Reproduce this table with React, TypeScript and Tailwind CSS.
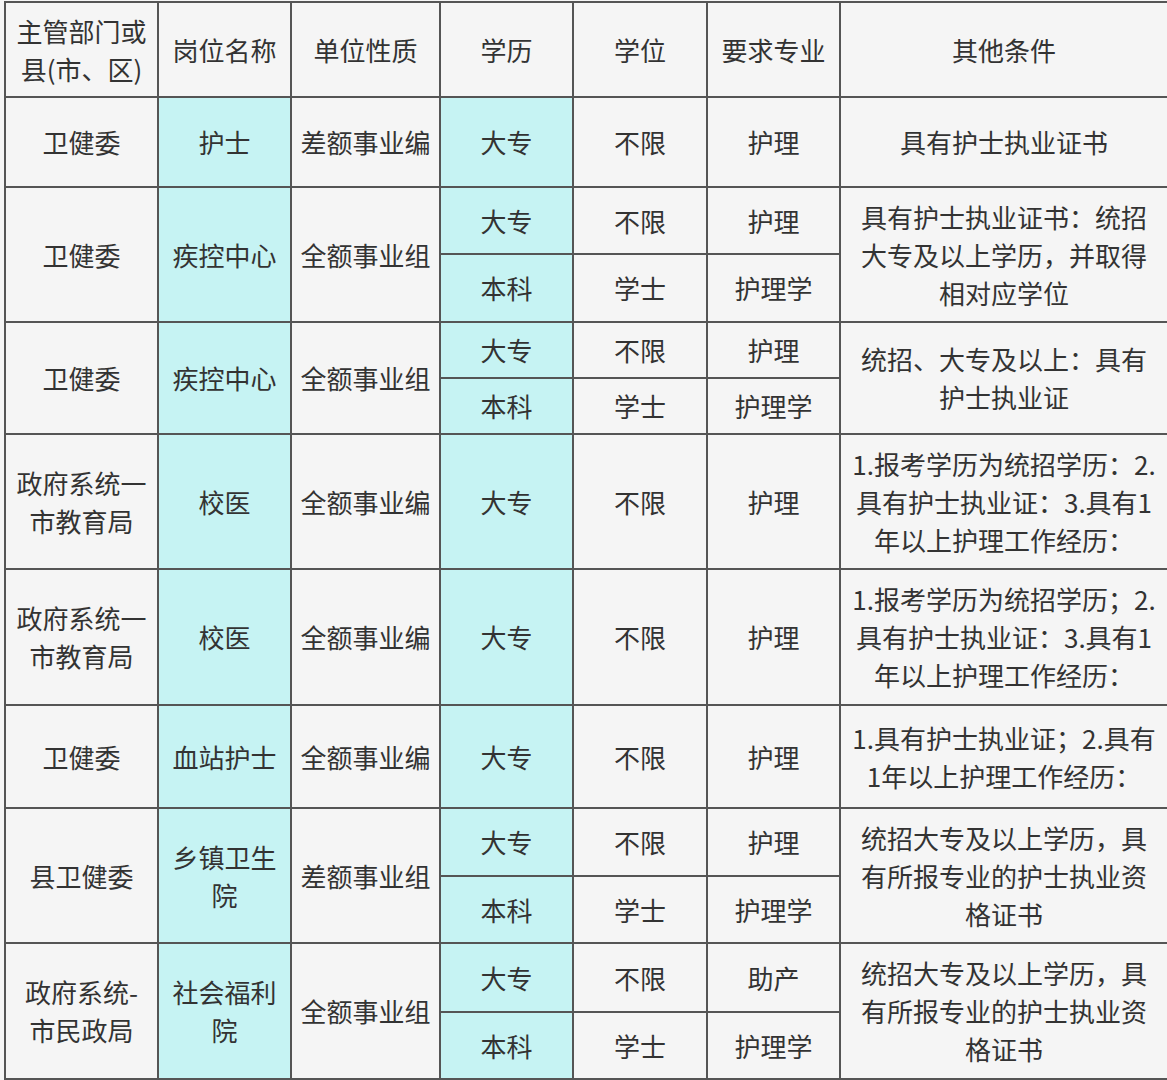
import React from 'react';

interface Sub {
    edu: string;
    degree: string;
    major: string;
    h: number;
}

interface Post {
    dept: string[];
    post: string[];
    nature: string;
    subs: Sub[];
    other: string[];
}

const posts: Post[] = [
    {
        dept: ['卫健委'],
        post: ['护士'],
        nature: '差额事业编',
        subs: [{ edu: '大专', degree: '不限', major: '护理', h: 90 }],
        other: ['具有护士执业证书'],
    },
    {
        dept: ['卫健委'],
        post: ['疾控中心'],
        nature: '全额事业组',
        subs: [
            { edu: '大专', degree: '不限', major: '护理', h: 67 },
            { edu: '本科', degree: '学士', major: '护理学', h: 68 },
        ],
        other: ['具有护士执业证书：统招', '大专及以上学历，并取得', '相对应学位'],
    },
    {
        dept: ['卫健委'],
        post: ['疾控中心'],
        nature: '全额事业组',
        subs: [
            { edu: '大专', degree: '不限', major: '护理', h: 56 },
            { edu: '本科', degree: '学士', major: '护理学', h: 56 },
        ],
        other: ['统招、大专及以上：具有', '护士执业证'],
    },
    {
        dept: ['政府系统一', '市教育局'],
        post: ['校医'],
        nature: '全额事业编',
        subs: [{ edu: '大专', degree: '不限', major: '护理', h: 135 }],
        other: ['1.报考学历为统招学历：2.', '具有护士执业证：3.具有1', '年以上护理工作经历：'],
    },
    {
        dept: ['政府系统一', '市教育局'],
        post: ['校医'],
        nature: '全额事业编',
        subs: [{ edu: '大专', degree: '不限', major: '护理', h: 136 }],
        other: ['1.报考学历为统招学历；2.', '具有护士执业证：3.具有1', '年以上护理工作经历：'],
    },
    {
        dept: ['卫健委'],
        post: ['血站护士'],
        nature: '全额事业编',
        subs: [{ edu: '大专', degree: '不限', major: '护理', h: 103 }],
        other: ['1.具有护士执业证；2.具有', '1年以上护理工作经历：'],
    },
    {
        dept: ['县卫健委'],
        post: ['乡镇卫生', '院'],
        nature: '差额事业组',
        subs: [
            { edu: '大专', degree: '不限', major: '护理', h: 68 },
            { edu: '本科', degree: '学士', major: '护理学', h: 67 },
        ],
        other: ['统招大专及以上学历，具', '有所报专业的护士执业资', '格证书'],
    },
    {
        dept: ['政府系统-', '市民政局'],
        post: ['社会福利', '院'],
        nature: '全额事业组',
        subs: [
            { edu: '大专', degree: '不限', major: '助产', h: 69 },
            { edu: '本科', degree: '学士', major: '护理学', h: 67 },
        ],
        other: ['统招大专及以上学历，具', '有所报专业的护士执业资', '格证书'],
    },
];

const cell = 'border-2 border-[#555] text-center align-middle px-1 leading-[38px]';
const cyan = 'bg-[#c6f3f3]';

function Lines({ lines }: { lines: string[] }) {
    return (
        <>
            {lines.map((l, i) => (
                <div key={i}>{l}</div>
            ))}
        </>
    );
}

export default function App() {
    return (
        <div
            className="w-[1167px] h-[1080px] bg-[#f5f5f5] pl-[4px] pt-[1px] text-[#333] text-[26px]"
            style={{ fontFamily: '"Noto Sans CJK SC", "Noto Sans", sans-serif' }}
        >
            <table className="table-fixed border-collapse w-[1163px]">
                <colgroup>
                    <col className="w-[153px]" />
                    <col className="w-[133px]" />
                    <col className="w-[149px]" />
                    <col className="w-[133px]" />
                    <col className="w-[134px]" />
                    <col className="w-[133px]" />
                    <col className="w-[328px]" />
                </colgroup>
                <tbody>
                    {/* Header */}
                    <tr className="h-[95px]">
                        <td className={cell}>
                            <Lines lines={['主管部门或', '县(市、区)']} />
                        </td>
                        <td className={cell}>岗位名称</td>
                        <td className={cell}>单位性质</td>
                        <td className={cell}>学历</td>
                        <td className={cell}>学位</td>
                        <td className={cell}>要求专业</td>
                        <td className={cell}>其他条件</td>
                    </tr>

                    {posts.map((p, pi) =>
                        p.subs.map((s, si) => (
                            <tr key={`${pi}-${si}`} style={{ height: s.h }}>
                                {si === 0 && (
                                    <>
                                        <td className={cell} rowSpan={p.subs.length}>
                                            <Lines lines={p.dept} />
                                        </td>
                                        <td className={`${cell} ${cyan}`} rowSpan={p.subs.length}>
                                            <Lines lines={p.post} />
                                        </td>
                                        <td className={cell} rowSpan={p.subs.length}>
                                            {p.nature}
                                        </td>
                                    </>
                                )}
                                <td className={`${cell} ${cyan}`}>{s.edu}</td>
                                <td className={cell}>{s.degree}</td>
                                <td className={cell}>{s.major}</td>
                                {si === 0 && (
                                    <td className={`${cell} whitespace-nowrap`} rowSpan={p.subs.length}>
                                        <Lines lines={p.other} />
                                    </td>
                                )}
                            </tr>
                        ))
                    )}
                </tbody>
            </table>
        </div>
    );
}
